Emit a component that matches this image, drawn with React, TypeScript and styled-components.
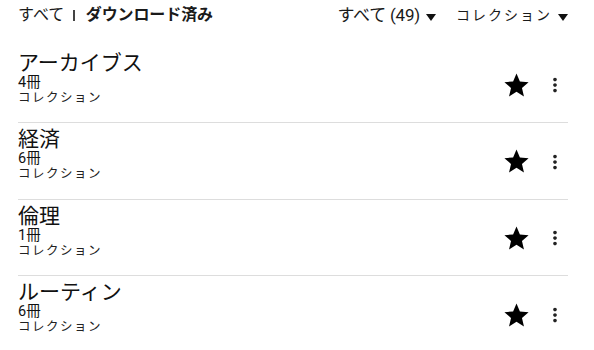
import styled, { createGlobalStyle } from "styled-components";
import { MdStar, MdMoreVert } from "react-icons/md";

const GlobalStyle = createGlobalStyle`
  body {
    margin: 0;
    background: #ffffff;
    font-family: Roboto, "Noto Sans CJK JP", sans-serif;
    color: #111111;
  }
`;

type Collection = {
  name: string;
  count: number;
};

const collections: Collection[] = [
  { name: "アーカイブス", count: 4 },
  { name: "経済", count: 6 },
  { name: "倫理", count: 1 },
  { name: "ルーティン", count: 6 },
];

const App = () => {
  return (
    <>
      <GlobalStyle />
      <Page>
        <Toolbar>
          <Tabs>
            <Tab>すべて</Tab>
            <Separator />
            <Tab $active>ダウンロード済み</Tab>
          </Tabs>
          <Filters>
            <Filter>
              すべて (49)
              <Caret />
            </Filter>
            <Filter $spaced>
              コレクション
              <Caret />
            </Filter>
          </Filters>
        </Toolbar>
        <List>
          {collections.map((item) => (
            <Row key={item.name}>
              <Info>
                <Name>{item.name}</Name>
                <Count>{item.count}冊</Count>
                <Kind>コレクション</Kind>
              </Info>
              <Actions>
                <StarButton>
                  <MdStar size={29} />
                </StarButton>
                <MenuButton>
                  <MdMoreVert size={22} />
                </MenuButton>
              </Actions>
            </Row>
          ))}
        </List>
      </Page>
    </>
  );
};

export default App;

const Page = styled.div`
  width: 594px;
  padding: 0 26px 0 18px;
  box-sizing: border-box;
`;

const Toolbar = styled.div`
  display: flex;
  justify-content: space-between;
  align-items: center;
  height: 30px;
`;

const Tabs = styled.div`
  display: flex;
  align-items: center;
  font-size: 16px;
  line-height: 20px;
`;

const Tab = styled.span<{ $active?: boolean }>`
  font-weight: ${({ $active }) => ($active ? 700 : 400)};
  letter-spacing: ${({ $active }) => ($active ? "-0.1px" : "0")};
  color: #1a1a1a;
`;

const Separator = styled.span`
  width: 1.5px;
  height: 11px;
  margin: 1px 11px 0 9px;
  background: #444;
`;

const Filters = styled.div`
  display: flex;
  align-items: center;
  gap: 20px;
`;

const Filter = styled.span<{ $spaced?: boolean }>`
  display: flex;
  align-items: center;
  font-size: ${({ $spaced }) => ($spaced ? "14px" : "17px")};
  line-height: 20px;
  letter-spacing: ${({ $spaced }) => ($spaced ? "2px" : "-0.2px")};
  color: #1a1a1a;
`;

const Caret = styled.span`
  width: 0;
  height: 0;
  margin: 5px 0 0 6px;
  border-left: 5px solid transparent;
  border-right: 5px solid transparent;
  border-top: 7px solid #111;
`;

const List = styled.div`
  display: flex;
  flex-direction: column;
  padding-top: 16.5px;
`;

const Row = styled.div`
  display: flex;
  align-items: flex-start;
  justify-content: space-between;
  height: 76.5px;
  box-sizing: border-box;
  border-bottom: 1px solid #dddddd;
  padding-top: 4px;

  &:last-child {
    border-bottom: none;
  }
`;

const Info = styled.div`
  display: flex;
  flex-direction: column;
`;

const Name = styled.div`
  font-size: 21px;
  line-height: 24px;
  color: #111;
`;

const Count = styled.div`
  font-size: 14.5px;
  line-height: 15px;
  color: #111;
`;

const Kind = styled.div`
  font-size: 12.5px;
  line-height: 16px;
  letter-spacing: 1.5px;
  color: #222;
`;

const Actions = styled.div`
  display: flex;
  align-items: center;
  align-self: center;
  gap: 13px;
  margin-top: -2px;
  margin-right: 2px;
`;

const StarButton = styled.span`
  display: flex;
  color: #000;
`;

const MenuButton = styled.span`
  display: flex;
  color: #222;
`;
